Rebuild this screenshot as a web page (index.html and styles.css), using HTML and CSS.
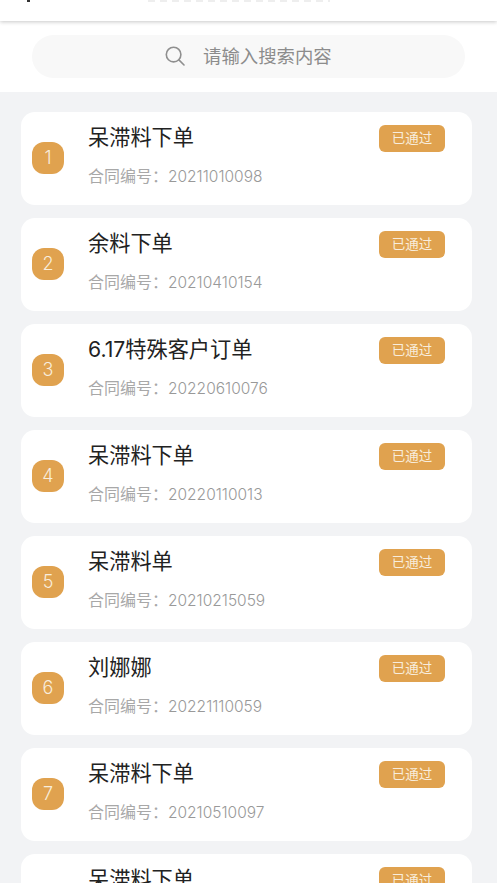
FILE: index.html
```html
<!DOCTYPE html>
<html lang="zh-CN">
<head>
<meta charset="utf-8">
<title>呆滞料下单</title>
<link rel="stylesheet" href="styles.css">
</head>
<body>
<div class="page">
  <header class="topbar">
    <span class="back-tip"></span>
    <span class="title-trace"></span>
  </header>
  <section class="search">
    <div class="search-pill">
      <svg class="search-icon" viewBox="0 0 20 20" aria-hidden="true"><circle cx="8.6" cy="8.6" r="7.3"/><path d="M13.9 13.9 19 19"/></svg>
      <span class="placeholder">请输入搜索内容</span>
    </div>
  </section>
  <main class="list">
    <article class="card"><div class="num">1</div><div class="info"><div class="name">呆滞料下单</div><div class="contract">合同编号：<span class="code">20211010098</span></div></div><div class="tag">已通过</div></article>
    <article class="card"><div class="num">2</div><div class="info"><div class="name">余料下单</div><div class="contract">合同编号：<span class="code">20210410154</span></div></div><div class="tag">已通过</div></article>
    <article class="card"><div class="num">3</div><div class="info"><div class="name">6.17特殊客户订单</div><div class="contract">合同编号：<span class="code">20220610076</span></div></div><div class="tag">已通过</div></article>
    <article class="card"><div class="num">4</div><div class="info"><div class="name">呆滞料下单</div><div class="contract">合同编号：<span class="code">20220110013</span></div></div><div class="tag">已通过</div></article>
    <article class="card"><div class="num">5</div><div class="info"><div class="name">呆滞料单</div><div class="contract">合同编号：<span class="code">20210215059</span></div></div><div class="tag">已通过</div></article>
    <article class="card"><div class="num">6</div><div class="info"><div class="name">刘娜娜</div><div class="contract">合同编号：<span class="code">20221110059</span></div></div><div class="tag">已通过</div></article>
    <article class="card"><div class="num">7</div><div class="info"><div class="name">呆滞料下单</div><div class="contract">合同编号：<span class="code">20210510097</span></div></div><div class="tag">已通过</div></article>
    <article class="card"><div class="num">8</div><div class="info"><div class="name">呆滞料下单</div></div><div class="tag">已通过</div></article>
  </main>
</div>
</body>
</html>
```
FILE: styles.css
```css
* { box-sizing: border-box; }
html, body { margin: 0; padding: 0; }
body {
  background: #f2f3f5;
  font-family: Inter, "Noto Sans CJK SC", sans-serif;
  overflow: hidden;
}
.page { height: 883px; overflow: hidden; }
.topbar {
  position: relative;
  z-index: 1;
  height: 21px;
  background: #fff;
  box-shadow: 0 1px 4px rgba(0, 0, 0, 0.22);
  display: flex;
  align-items: flex-start;
}
.back-tip {
  width: 3px;
  height: 2px;
  margin-left: 27px;
  background: #333;
}
.title-trace {
  width: 182px;
  height: 2px;
  margin-left: 118px;
  background: repeating-linear-gradient(90deg, #eee 0 7px, #fff 7px 12px);
}
.search {
  background: #fff;
  padding: 14px 32px;
}
.search-pill {
  height: 43px;
  border-radius: 22px;
  background: #f8f8f8;
  display: flex;
  align-items: center;
  padding: 0 0 2px 133px;
}
.search-icon {
  width: 20px;
  height: 20px;
  fill: none;
  stroke: #8f8f8f;
  stroke-width: 1.6;
  stroke-linecap: round;
}
.placeholder {
  margin-left: 18px;
  font-size: 18.4px;
  line-height: 26px;
  color: #8c8c8c;
  white-space: nowrap;
}
.list {
  padding: 20px 25px 0 21px;
  display: flex;
  flex-direction: column;
  gap: 13px;
}
.card {
  flex: none;
  height: 93px;
  background: #fff;
  border-radius: 14px;
  display: flex;
  align-items: center;
}
.num {
  flex: none;
  width: 32px;
  height: 32px;
  margin: 0 0 1px 11px;
  border-radius: 12px;
  background: #e0a24f;
  color: #f8eddc;
  font-size: 18px;
  font-weight: 300;
  line-height: 32px;
  text-align: center;
}
.info {
  flex: 1;
  min-width: 0;
  margin-left: 24px;
  align-self: flex-start;
  padding-top: 11px;
}
.name {
  font-size: 21.2px;
  line-height: 28px;
  color: #222;
  white-space: nowrap;
}
.contract {
  margin-top: 13px;
  font-size: 16px;
  line-height: 24px;
  color: #a8a8a8;
  white-space: nowrap;
}
.code {
  font-size: 15.5px;
  font-weight: 300;
  color: #999;
}
.tag {
  flex: none;
  align-self: flex-start;
  width: 66px;
  height: 27px;
  margin: 13px 27px 0 0;
  border-radius: 6px;
  background: #e0a24f;
  color: #f8eddc;
  font-size: 13.5px;
  line-height: 26px;
  text-align: center;
}
```
